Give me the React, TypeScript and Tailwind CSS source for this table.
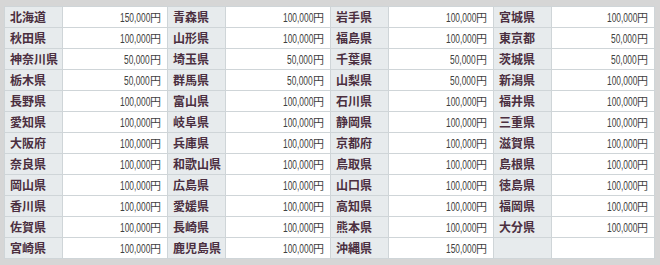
import React from 'react';

type Entry = [string, string];

const rows: Entry[][] = [
    [['北海道', '150,000'], ['青森県', '100,000'], ['岩手県', '100,000'], ['宮城県', '100,000']],
    [['秋田県', '100,000'], ['山形県', '100,000'], ['福島県', '100,000'], ['東京都', '50,000']],
    [['神奈川県', '50,000'], ['埼玉県', '50,000'], ['千葉県', '50,000'], ['茨城県', '50,000']],
    [['栃木県', '50,000'], ['群馬県', '50,000'], ['山梨県', '50,000'], ['新潟県', '100,000']],
    [['長野県', '100,000'], ['富山県', '100,000'], ['石川県', '100,000'], ['福井県', '100,000']],
    [['愛知県', '100,000'], ['岐阜県', '100,000'], ['静岡県', '100,000'], ['三重県', '100,000']],
    [['大阪府', '100,000'], ['兵庫県', '100,000'], ['京都府', '100,000'], ['滋賀県', '100,000']],
    [['奈良県', '100,000'], ['和歌山県', '100,000'], ['鳥取県', '100,000'], ['島根県', '100,000']],
    [['岡山県', '100,000'], ['広島県', '100,000'], ['山口県', '100,000'], ['徳島県', '100,000']],
    [['香川県', '100,000'], ['愛媛県', '100,000'], ['高知県', '100,000'], ['福岡県', '100,000']],
    [['佐賀県', '100,000'], ['長崎県', '100,000'], ['熊本県', '100,000'], ['大分県', '100,000']],
    [['宮崎県', '100,000'], ['鹿児島県', '100,000'], ['沖縄県', '150,000'], ['', '']],
];

const App: React.FC = () => {
    return (
        <div className="w-[660px] h-[265px] bg-[#d6d6d6] pt-[6px] pl-[4px] overflow-hidden">
            <table className="table-fixed border-collapse border border-[#b9b9b9] bg-white w-[650px]">
                <colgroup>
                    <col className="w-[58px]" />
                    <col className="w-[105px]" />
                    <col className="w-[58px]" />
                    <col className="w-[105px]" />
                    <col className="w-[58px]" />
                    <col className="w-[105px]" />
                    <col className="w-[58px]" />
                    <col className="w-[103px]" />
                </colgroup>
                <tbody>
                    {rows.map((row, i) => (
                        <tr key={i} className="h-[21px]">
                            {row.map(([name, price], j) => (
                                <React.Fragment key={j}>
                                    <th
                                        className="border border-[#cfd5d8] bg-[#e7ebed] p-0 pl-[5px] text-left align-middle text-[12px] font-bold text-[#4b2f40] whitespace-nowrap"
                                        style={{ fontFamily: '"Noto Sans CJK JP", sans-serif' }}
                                    >
                                        {name}
                                    </th>
                                    <td
                                        className="border border-[#cfd5d8] p-0 pr-[6px] text-right align-middle leading-none text-[#404040] whitespace-nowrap"
                                        style={{ fontFamily: '"Liberation Sans", "Noto Sans CJK JP", sans-serif' }}
                                    >
                                        {price && (
                                            <>
                                                <span className="inline-block origin-right scale-x-[0.7] text-[12px]">{price}</span>
                                                <span className="text-[11px]">円</span>
                                            </>
                                        )}
                                    </td>
                                </React.Fragment>
                            ))}
                        </tr>
                    ))}
                </tbody>
            </table>
        </div>
    );
};

export default App;
